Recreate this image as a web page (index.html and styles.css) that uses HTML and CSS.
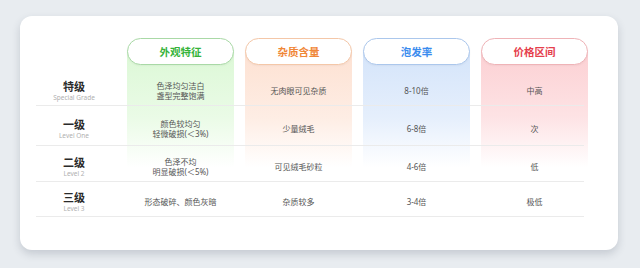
FILE: index.html
```html
<!DOCTYPE html>
<html lang="zh-CN">
<head>
<meta charset="utf-8">
<title>等级对照表</title>
<link rel="stylesheet" href="styles.css">
</head>
<body>
<div class="card">
  <div class="grid">
    <div class="tint tint-green c1"></div>
    <div class="tint tint-orange c2"></div>
    <div class="tint tint-blue c3"></div>
    <div class="tint tint-red c4"></div>

    <div class="rule r1"></div>
    <div class="rule r2"></div>
    <div class="rule r3"></div>
    <div class="rule r4"></div>

    <div class="pill pill-green c1">外观特征</div>
    <div class="pill pill-orange c2">杂质含量</div>
    <div class="pill pill-blue c3">泡发率</div>
    <div class="pill pill-red c4">价格区间</div>

    <div class="label r1 first"><span class="t">特级</span><span class="s">Special Grade</span></div>
    <div class="cell r1 c1 first">色泽均匀洁白<br>盏型完整饱满</div>
    <div class="cell r1 c2 first">无肉眼可见杂质</div>
    <div class="cell r1 c3 first">8-10倍</div>
    <div class="cell r1 c4 first">中高</div>

    <div class="label r2"><span class="t">一级</span><span class="s">Level One</span></div>
    <div class="cell r2 c1">颜色较均匀<br>轻微破损(＜3%)</div>
    <div class="cell r2 c2">少量绒毛</div>
    <div class="cell r2 c3">6-8倍</div>
    <div class="cell r2 c4">次</div>

    <div class="label r3"><span class="t">二级</span><span class="s">Level 2</span></div>
    <div class="cell r3 c1">色泽不均<br>明显破损(＜5%)</div>
    <div class="cell r3 c2">可见绒毛砂粒</div>
    <div class="cell r3 c3">4-6倍</div>
    <div class="cell r3 c4">低</div>

    <div class="label r4"><span class="t">三级</span><span class="s">Level 3</span></div>
    <div class="cell r4 c1">形态破碎、颜色灰暗</div>
    <div class="cell r4 c2">杂质较多</div>
    <div class="cell r4 c3">3-4倍</div>
    <div class="cell r4 c4">极低</div>
  </div>
</div>
</body>
</html>
```
FILE: styles.css
```css
html, body {
  margin: 0;
  padding: 0;
}
body {
  width: 640px;
  height: 268px;
  background: #e8ecf0;
  font-family: "Noto Sans", "Noto Sans CJK SC", sans-serif;
  overflow: hidden;
}
.card {
  box-sizing: border-box;
  margin: 16px 0 0 20px;
  width: 598px;
  height: 234px;
  background: #ffffff;
  border-radius: 12px;
  box-shadow: 0 4px 9px rgba(40, 50, 70, 0.18);
  padding: 22px 30px 0 16px;
}
.grid {
  display: grid;
  grid-template-columns: 80px repeat(4, 107px);
  column-gap: 11px;
  grid-template-rows: 27px 41px 40px 36px 35px;
}
.c1 { grid-column: 2; }
.c2 { grid-column: 3; }
.c3 { grid-column: 4; }
.c4 { grid-column: 5; }

.tint {
  grid-row: 1 / 5;
}
.tint-green  { background: linear-gradient(to bottom, rgba(220,248,214,0) 12px, #dcf8d6 13px, rgba(220,248,214,0.6) 55%, rgba(220,248,214,0) 90%); }
.tint-orange { background: linear-gradient(to bottom, rgba(253,225,210,0) 12px, #fde1d2 13px, rgba(253,225,210,0.6) 55%, rgba(253,225,210,0) 90%); }
.tint-blue   { background: linear-gradient(to bottom, rgba(212,228,250,0) 12px, #d4e4fa 13px, rgba(212,228,250,0.6) 55%, rgba(212,228,250,0) 90%); }
.tint-red    { background: linear-gradient(to bottom, rgba(252,208,211,0) 12px, #fcd0d3 13px, rgba(252,208,211,0.6) 55%, rgba(252,208,211,0) 90%); }

.rule {
  grid-column: 1 / -1;
  align-self: end;
  margin-right: 4px;
  border-bottom: 1px solid #ebebeb;
}
.rule.r1, .label.r1, .cell.r1 { grid-row: 2; }
.rule.r2, .label.r2, .cell.r2 { grid-row: 3; }
.rule.r3, .label.r3, .cell.r3 { grid-row: 4; }
.rule.r4, .label.r4, .cell.r4 { grid-row: 5; }

.pill {
  grid-row: 1;
  box-sizing: border-box;
  background: #ffffff;
  border: 1.5px solid;
  border-radius: 14px;
  display: flex;
  align-items: center;
  justify-content: center;
  font-family: "Noto Sans CJK SC", sans-serif;
  font-weight: 700;
  font-size: 10.5px;
  box-shadow: 0 1px 2px rgba(0, 0, 0, 0.04);
}
.pill-green  { color: #36b33a; border-color: #a9d9a6; }
.pill-orange { color: #f08738; border-color: #f4c7a8; }
.pill-blue   { color: #3b8cee; border-color: #abc7ec; }
.pill-red    { color: #e5404d; border-color: #efb3b7; }

.label {
  grid-column: 1;
  display: flex;
  flex-direction: column;
  align-items: center;
  justify-content: center;
  padding: 5px 4px 0 0;
}
.label .t {
  font-family: "Noto Sans CJK SC", sans-serif;
  font-weight: 700;
  font-size: 11px;
  line-height: 13px;
  color: #2a2a2a;
}
.label .s {
  font-size: 6.5px;
  line-height: 9px;
  color: #b0b0b0;
  white-space: nowrap;
}
.cell {
  display: flex;
  align-items: center;
  justify-content: center;
  text-align: center;
  padding-top: 5px;
  font-size: 8px;
  line-height: 9.5px;
  color: #555555;
}
.first {
  padding-top: 10px;
}
```
